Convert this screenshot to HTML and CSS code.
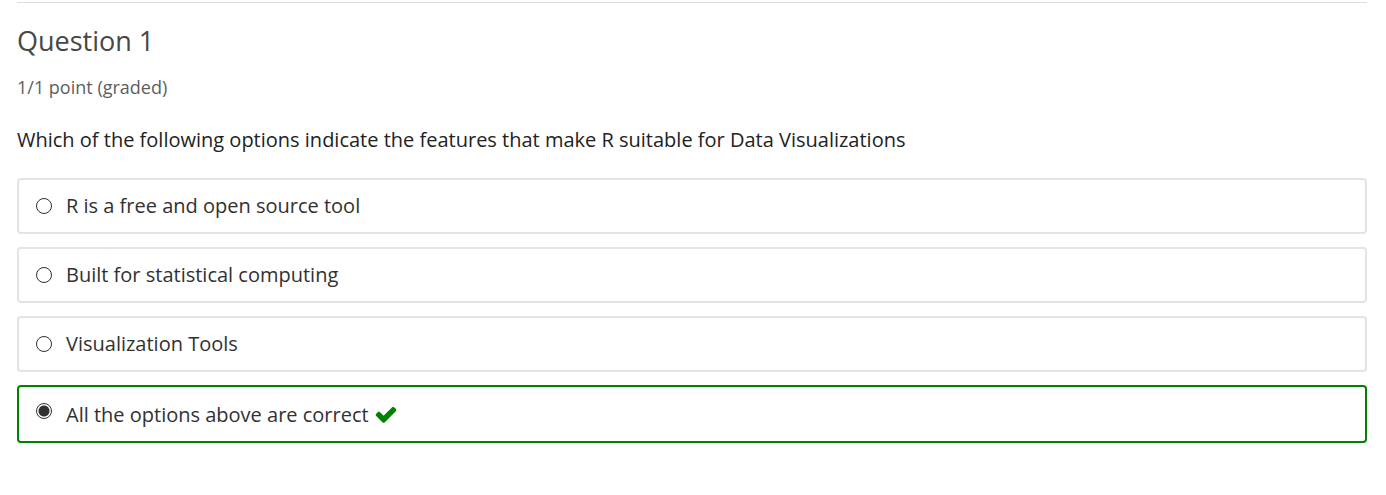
FILE: index.html
```html
<!DOCTYPE html>
<html lang="en">
<head>
<meta charset="utf-8">
<title>Question 1</title>
<link rel="stylesheet" href="styles.css">
</head>
<body>
<main class="problem">
  <h1 class="title">Question 1</h1>
  <p class="progress">1/1 point (graded)</p>
  <form>
    <fieldset class="choices">
      <legend class="prompt">Which of the following options indicate the features that make R suitable for Data Visualizations</legend>
      <label class="choice"><input class="radio" type="radio" name="answer"><span>R is a free and open source tool</span></label>
      <label class="choice"><input class="radio" type="radio" name="answer"><span>Built for statistical computing</span></label>
      <label class="choice"><input class="radio" type="radio" name="answer"><span>Visualization Tools</span></label>
      <label class="choice correct"><input class="radio" type="radio" name="answer" checked><span>All the options above are correct</span><svg class="check" viewBox="0 0 22 18" role="img" aria-label="Correct"><path d="M21 4.9 9.6 16.4q-1 .9-2 0L1 9.8q-.8-.9 0-1.8l2-2q.9-.8 1.8 0l3.8 3.8L17.2 1.2q.9-.8 1.8 0l2 1.9q.8.9 0 1.8Z"/></svg></label>
    </fieldset>
  </form>
</main>
</body>
</html>
```

FILE: styles.css
```css
* { box-sizing: border-box; }
body {
  margin: 0;
  background: #fff;
  color: #222;
  font-family: "Open Sans", sans-serif;
  font-size: 20px;
  line-height: 28px;
}
.problem {
  margin: 2px 19px 0 17px;
  padding-top: 20px;
  border-top: 1px solid #ddd;
}
.title {
  margin: 0;
  color: #474747;
  font-size: 27px;
  font-weight: 400;
  line-height: 36px;
}
.progress {
  margin: 16px 0 0;
  color: #5e5e5e;
  font-size: 18px;
  line-height: 24px;
}
.choices {
  display: flex;
  flex-direction: column;
  gap: 13px;
  min-width: 0;
  margin: 27px 0 0;
  padding: 0;
  border: 0;
}
.prompt {
  margin-bottom: 24px;
  padding: 0;
}
.choice {
  display: flex;
  align-items: center;
  padding: 12px 17px;
  border: 2px solid #e4e4e4;
  border-radius: 4px;
  color: #313131;
  cursor: pointer;
}
.correct {
  padding: 13px 17px 11px;
  border-color: #008100;
  line-height: 30px;
}
.radio {
  appearance: none;
  width: 16px;
  height: 16px;
  margin: 0 14px 0 0;
  border: 1px solid #313131;
  border-radius: 50%;
  background: #fff;
}
.radio:checked {
  align-self: flex-start;
  margin-top: 3px;
  background: radial-gradient(circle, #313131 5px, #fff 6px);
}
.check {
  width: 22px;
  height: 18px;
  margin-left: 6px;
  fill: #008100;
}
```
